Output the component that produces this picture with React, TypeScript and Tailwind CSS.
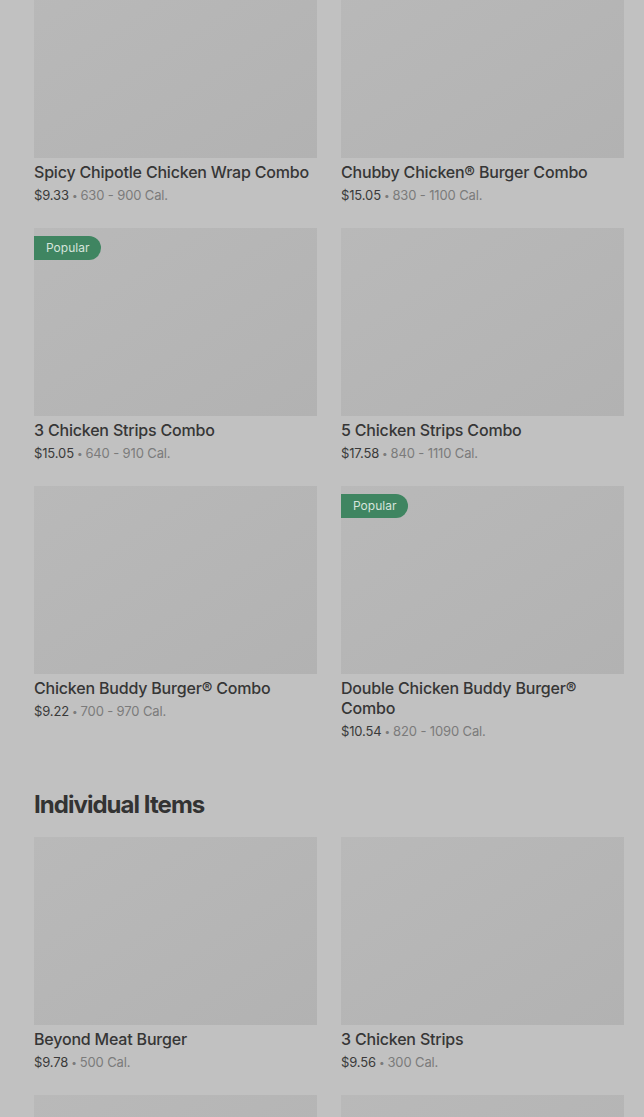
type Item = { name?: string; price?: string; cal?: string; popular?: boolean };

const combos: Item[] = [
  { name: "Spicy Chipotle Chicken Wrap Combo", price: "$9.33", cal: "630 - 900 Cal." },
  { name: "Chubby Chicken® Burger Combo", price: "$15.05", cal: "830 - 1100 Cal." },
  { name: "3 Chicken Strips Combo", price: "$15.05", cal: "640 - 910 Cal.", popular: true },
  { name: "5 Chicken Strips Combo", price: "$17.58", cal: "840 - 1110 Cal." },
  { name: "Chicken Buddy Burger® Combo", price: "$9.22", cal: "700 - 970 Cal." },
  { name: "Double Chicken Buddy Burger® Combo", price: "$10.54", cal: "820 - 1090 Cal.", popular: true },
];

// last row is scrolled past the bottom edge, only the image tops show
const individual: Item[] = [
  { name: "Beyond Meat Burger", price: "$9.78", cal: "500 Cal." },
  { name: "3 Chicken Strips", price: "$9.56", cal: "300 Cal." },
  {},
  {},
];

const Card = ({ item }: { item: Item }) => (
  <div className="flex flex-col">
    <div className="relative h-[188px] bg-gradient-to-br from-[#b9b9b9] to-[#b2b2b2]">
      {item.popular && (
        <span className="absolute left-0 top-2 flex h-6 items-center rounded-r-full bg-[#3f8561] pl-3 pr-3 text-[12px] text-[#d6e4dc]">
          Popular
        </span>
      )}
    </div>
    {item.name && (
      <>
        <p className="mt-[4px] text-[16px] font-medium leading-5 tracking-[-0.012em] text-[#363636]">{item.name}</p>
        <p className="mt-[3px] flex h-5 items-center text-[13px] leading-5 tracking-[-0.01em] text-[#3a3a3a]">
          {item.price}
          <span className="mx-[3px] text-[10px] leading-none text-[#7b7b7b]">•</span>
          <span className="text-[#7b7b7b]">{item.cal}</span>
        </p>
      </>
    )}
  </div>
);

const App = () => {
  return (
    <div className="h-[1117px] overflow-hidden bg-[#c1c1c1]" style={{ fontFamily: "Inter, 'Noto Sans', sans-serif" }}>
      <div className="-mt-[30px] pl-[34px] pr-[20px]">
        <div className="grid grid-cols-2 gap-x-6 gap-y-[23px]">
          {combos.map((item, index) => (
            <Card key={index} item={item} />
          ))}
        </div>

        <h2 className="mt-[50px] mb-[18px] text-[24px] font-bold leading-7 tracking-[-0.04em] text-[#333333]">Individual Items</h2>

        <div className="grid grid-cols-2 gap-x-6 gap-y-[23px]">
          {individual.map((item, index) => (
            <Card key={index} item={item} />
          ))}
        </div>
      </div>
    </div>
  );
};

export default App;
